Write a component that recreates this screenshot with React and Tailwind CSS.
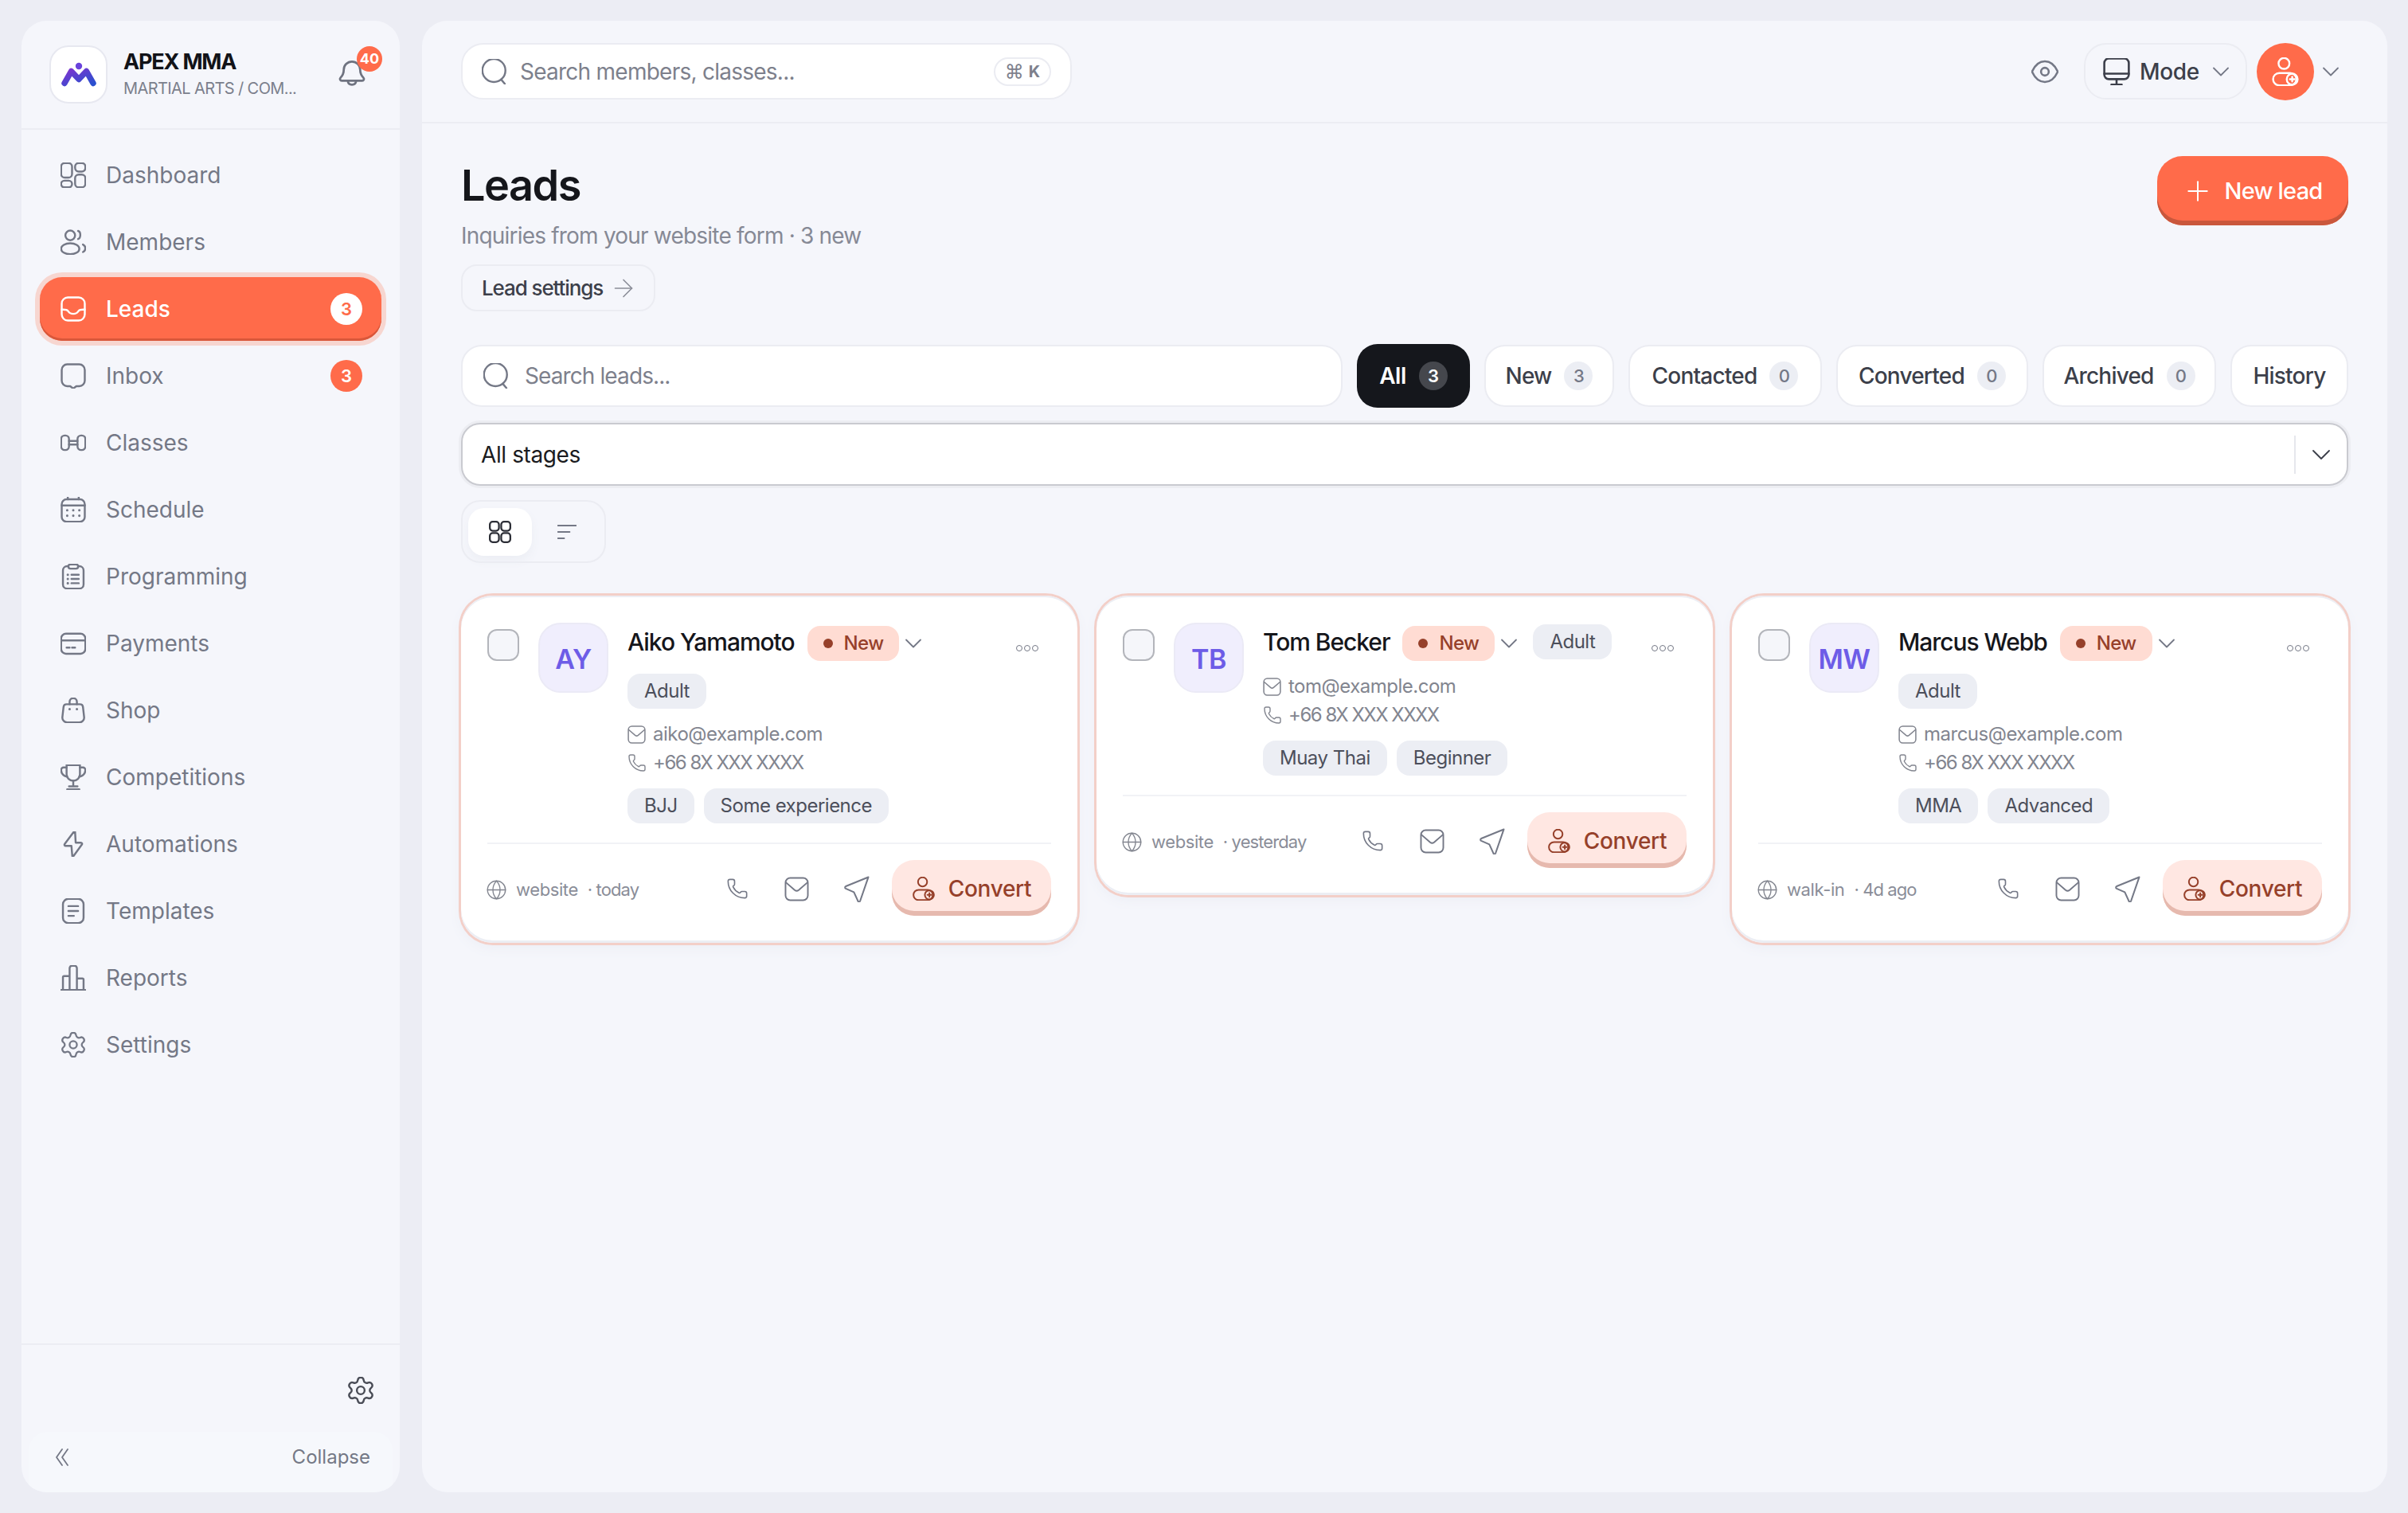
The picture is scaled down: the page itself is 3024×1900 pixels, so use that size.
import { ArrowRight, ChevronDown, Globe, Phone, Plus, Settings } from "lucide-react";

function Icon({ className, children, strokeWidth = 1.6 }) {
  return (
    <svg viewBox="1.5 1.5 21 21" fill="none" stroke="currentColor" strokeWidth={strokeWidth} strokeLinecap="round" strokeLinejoin="round" className={className}>
      {children}
    </svg>
  );
}

const DashboardIcon = (p) => (
  <Icon {...p}>
    <rect x="2" y="2" width="9" height="12" rx="3" />
    <rect x="13.500" y="2" width="8.500" height="7" rx="3" />
    <rect x="2" y="16.500" width="9" height="5.500" rx="2.700" />
    <rect x="13.500" y="11.500" width="8.500" height="10.500" rx="3" />
  </Icon>
);
const MembersIcon = (p) => (
  <Icon {...p}>
    <circle cx="9.500" cy="6.500" r="4" />
    <path d="M16 2.800c2.400.6 2.400 6 0 6.700" />
    <ellipse cx="9.500" cy="17.500" rx="7.500" ry="4.500" />
    <path d="M20 14c2.600 1.200 2.600 5 0 6.200" />
  </Icon>
);
const TrayIcon = (p) => (
  <Icon {...p}>
    <rect x="2.500" y="2.500" width="19" height="19" rx="5" />
    <path d="M2.500 12.500c3 0 4.200-.2 5.200 1.200s1.500 2.300 4.300 2.300 3.300-.9 4.300-2.300 2.200-1.200 5.200-1.200" />
  </Icon>
);
const ChatIcon = (p) => (
  <Icon {...p}>
    <path d="M7 2.500h10a4.500 4.500 0 0 1 4.500 4.500v9a4.500 4.500 0 0 1-4.500 4.500h-2.500L12 22.500l-2.500-2H7A4.500 4.500 0 0 1 2.500 16V7A4.500 4.500 0 0 1 7 2.500z" />
  </Icon>
);
const DumbbellIcon = (p) => (
  <Icon {...p}>
    <rect x="2" y="6" width="6.500" height="12" rx="3" />
    <rect x="15.500" y="6" width="6.500" height="12" rx="3" />
    <path d="M8.500 10.500h7M8.500 13.500h7" />
  </Icon>
);
const CalendarIcon = (p) => (
  <Icon {...p}>
    <rect x="2.500" y="3.500" width="19" height="18.500" rx="4" />
    <path d="M2.500 8.500h19M7.500 1.800v1.700M16.500 1.800v1.700" />
    <path d="M7 12.500h.01M12 12.500h.01M17 12.500h.01M7 17h.01M12 17h.01M17 17h.01" strokeWidth="2" />
  </Icon>
);
const ClipboardIcon = (p) => (
  <Icon {...p}>
    <rect x="3.500" y="3.500" width="17" height="18.500" rx="3.500" />
    <rect x="8" y="2" width="8" height="3.500" rx="1.700" fill="#f5f6fb" />
    <path d="M10.500 10.500h6M10.500 14h6M10.500 17.500h6" />
    <path d="M7.500 10.500h.01M7.500 14h.01M7.500 17.500h.01" strokeWidth="2" />
  </Icon>
);
const CardIcon = (p) => (
  <Icon {...p}>
    <rect x="2" y="4" width="20" height="16.500" rx="4" />
    <path d="M2 9.500h20M6.500 15.500h2.500M11 15.500h2.500" />
  </Icon>
);
const BagIcon = (p) => (
  <Icon {...p}>
    <path d="M6.500 7h11a2.500 2.500 0 0 1 2.500 2.200l1 8.800a4 4 0 0 1-4 4H7a4 4 0 0 1-4-4l1-8.800A2.500 2.500 0 0 1 6.500 7z" />
    <path d="M9 7V5a3 3 0 0 1 6 0v2" />
    <path d="M9 11h.01M15 11h.01" strokeWidth="2" />
  </Icon>
);
const TrophyIcon = (p) => (
  <Icon {...p}>
    <path d="M6.500 2h11v7.500a5.500 5.500 0 0 1-11 0z" />
    <path d="M6.500 4H4a2 2 0 0 0-2 2.200C2.200 9 4 11 7 11.500M17.500 4H20a2 2 0 0 1 2 2.200C21.800 9 20 11 17 11.500" />
    <path d="M12 15v4.500M8.500 19.500h7M7 22h10" />
  </Icon>
);
const ZapIcon = (p) => (
  <Icon {...p}>
    <path d="M12.500 1.800 5 11.800c-.6.800-.2 1.700.8 1.700h4.700l.7 8.300c.1.500.6.600.9.200l6.900-9.500c.6-.8.200-1.700-.8-1.700h-4.200L13.500 2c0-.5-.6-.6-1-.2z" />
  </Icon>
);
const TemplateIcon = (p) => (
  <Icon {...p}>
    <rect x="3.500" y="2" width="17" height="20" rx="4.500" />
    <path d="M8 8h8M8 12h8M8 16h4.500" />
  </Icon>
);
const BarsIcon = (p) => (
  <Icon {...p}>
    <path d="M2 22h20M3.500 22V11.500a1 1 0 0 1 1-1H9M9 22V4a2 2 0 0 1 2-2h2a2 2 0 0 1 2 2v18M15 12.500h4.500a1 1 0 0 1 1 1V22" />
  </Icon>
);
const GearIcon = ({ className }) => <Settings viewBox="1.500 1.500 21 21" className={className} strokeWidth={1.5} />;
const BellIcon = (p) => (
  <Icon {...p}>
    <path d="M6 10a6 6 0 0 1 12 0c0 3 1 4.500 2.500 6 .6.600.2 2-1 2h-15c-1.200 0-1.600-1.400-1-2C5 14.500 6 13 6 10z" />
    <path d="M9 18c0 2 1.300 3 3 3s3-1 3-3" />
  </Icon>
);
const SearchIcon = (p) => (
  <Icon {...p}>
    <circle cx="11.500" cy="11" r="9.500" />
    <path d="M17.500 18.500l3 3.500" />
  </Icon>
);
const EyeIcon = (p) => (
  <Icon {...p}>
    <path d="M2 12c2.500-5.500 6-8 10-8s7.500 2.500 10 8c-2.500 5.500-6 8-10 8s-7.500-2.500-10-8z" />
    <circle cx="12" cy="12" r="3" />
  </Icon>
);
const MonitorIcon = (p) => (
  <Icon {...p}>
    <rect x="2.500" y="1.800" width="19" height="16" rx="3.500" />
    <path d="M2.500 13.500h19M12 18v4M8 22h8" />
  </Icon>
);
const PersonAddIcon = (p) => (
  <Icon {...p}>
    <circle cx="11" cy="6" r="4" />
    <rect x="3" y="13" width="17" height="9" rx="4.500" />
    <circle cx="17" cy="17.500" r="4" />
    <path d="M17 15.800v3.400M15.300 17.500h3.400" />
  </Icon>
);
const MailIcon = (p) => (
  <Icon {...p}>
    <rect x="2.500" y="2.500" width="19" height="19" rx="4" />
    <path d="M3 6.500l7.300 6.300c1 .8 2.400.8 3.400 0L21 6.500" />
  </Icon>
);
const SendIcon = (p) => (
  <Icon {...p}>
    <path d="M21.500 2.500 3.500 9.800c-.8.300-.8 1.400 0 1.800l6.500 2.900 3.200 7c.4.800 1.500.700 1.800-.100z" />
  </Icon>
);
const GridIcon = (p) => (
  <Icon {...p}>
    <rect x="3" y="3" width="8" height="8" rx="2.500" />
    <rect x="13" y="3" width="8" height="8" rx="2.500" />
    <rect x="3" y="13" width="8" height="8" rx="2.500" />
    <rect x="13" y="13" width="8" height="8" rx="2.500" />
  </Icon>
);
const SortIcon = (p) => (
  <Icon {...p}>
    <path d="M2 5h20M2 12h13M2 19h7" />
  </Icon>
);

function Logo() {
  return (
    <svg viewBox="0 0 44 31" className="h-[31px] w-[44px]">
      <defs>
        <linearGradient id="logoGrad" x1="0" y1="0" x2="1" y2="1">
          <stop offset="0" stopColor="#7a35cf" />
          <stop offset="1" stopColor="#2a50cf" />
        </linearGradient>
      </defs>
      <path d="M4 26.500 12.500 11.500 22 21.500 31.500 11.500 40 26.500" fill="none" stroke="url(#logoGrad)" strokeWidth="7.500" strokeLinecap="round" strokeLinejoin="round" />
      <circle cx="22" cy="5" r="4.200" fill="#6a43dc" />
    </svg>
  );
}

const navItems = [
  { label: "Dashboard", icon: DashboardIcon },
  { label: "Members", icon: MembersIcon },
  { label: "Leads", icon: TrayIcon, active: true, badge: "3" },
  { label: "Inbox", icon: ChatIcon, badge: "3" },
  { label: "Classes", icon: DumbbellIcon },
  { label: "Schedule", icon: CalendarIcon },
  { label: "Programming", icon: ClipboardIcon },
  { label: "Payments", icon: CardIcon },
  { label: "Shop", icon: BagIcon },
  { label: "Competitions", icon: TrophyIcon },
  { label: "Automations", icon: ZapIcon },
  { label: "Templates", icon: TemplateIcon },
  { label: "Reports", icon: BarsIcon },
  { label: "Settings", icon: GearIcon },
];

const tabs = [
  { label: "All", count: "3", active: true, width: "w-[142px]" },
  { label: "New", count: "3", width: "w-[163px]" },
  { label: "Contacted", count: "0", width: "w-[243px]" },
  { label: "Converted", count: "0", width: "w-[241px]" },
  { label: "Archived", count: "0", width: "w-[218px]" },
  { label: "History", width: "w-[148px]" },
];

const leads = [
  { initials: "AY", name: "Aiko Yamamoto", email: "aiko@example.com", tags: ["BJJ", "Some experience"], source: "website", when: "today" },
  { initials: "TB", name: "Tom Becker", email: "tom@example.com", tags: ["Muay Thai", "Beginner"], source: "website", when: "yesterday" },
  { initials: "MW", name: "Marcus Webb", email: "marcus@example.com", tags: ["MMA", "Advanced"], source: "walk-in", when: "4d ago" },
];

function Sidebar() {
  return (
    <aside className="flex w-[475px] shrink-0 flex-col overflow-hidden rounded-[32px] bg-[#f5f6fb]">
      <div className="flex h-[137px] shrink-0 items-center border-b-2 border-[#ecedf3] pl-[35px] pr-[42px]">
        <div className="flex h-[73px] w-[73px] shrink-0 items-center justify-center rounded-[24px] border-2 border-[#e7e8f0] bg-white">
          <Logo />
        </div>
        <div className="ml-[20px] min-w-0 flex-1 -translate-y-[1px]">
          <p className="text-[27px] leading-[32px] font-bold tracking-[-1.2px] text-[#121318]">APEX MMA</p>
          <p className="mt-[4px] text-[20px] leading-[26px] tracking-[-0.6px] text-[#7b7f8c]">MARTIAL ARTS / COM...</p>
        </div>
        <div className="relative -mt-[6px] h-[36px] w-[36px] shrink-0 text-[#6f7380]">
          <BellIcon className="h-[36px] w-[36px]" />
          <span className="absolute left-[24px] top-[-15px] flex h-[32px] w-[32px] items-center justify-center rounded-full bg-[#ff6b4a] text-[18px] font-bold text-white">40</span>
        </div>
      </div>

      <nav className="flex flex-1 flex-col gap-[4px] px-[23px] pt-[17px]">
        {navItems.map((item) => {
          const ItemIcon = item.icon;
          return (
            <div
              key={item.label}
              className={
                item.active
                  ? "flex h-[80px] items-center rounded-[28px] bg-[#ff6b4a] pl-[26px] pr-[24px] text-white shadow-[0_0_0_6px_#f7d6d0,inset_0_-3px_0_#d9573a]"
                  : "flex h-[80px] items-center pl-[26px] pr-[24px] text-[#747886]"
              }
            >
              <ItemIcon className="h-[32px] w-[32px] shrink-0" />
              <span className={item.active ? "ml-[25px] flex-1 text-[28px] font-medium" : "ml-[25px] flex-1 text-[28px]"}>{item.label}</span>
              {item.badge ? (
                <span className={item.active ? "flex h-[40px] w-[40px] items-center justify-center rounded-full bg-white text-[22px] font-semibold text-[#ff6b4a]" : "flex h-[40px] w-[40px] items-center justify-center rounded-full bg-[#ff6b4a] text-[22px] font-semibold text-white"}>
                  {item.badge}
                </span>
              ) : null}
            </div>
          );
        })}
      </nav>

      <div className="shrink-0 border-t-2 border-[#ecedf3]">
        <div className="flex justify-end pr-[32px] pt-[40px] pb-[35px] text-[#4a4d57]">
          <GearIcon className="h-[34px] w-[34px]" />
        </div>
        <div className="mx-[9px] flex h-[76px] items-center justify-between rounded-t-[24px] bg-[#f6f8fc] pb-[12px] pl-[34px] pr-[28px] text-[#747886]">
          <svg viewBox="0 0 16 22" fill="none" stroke="currentColor" strokeWidth="1.800" strokeLinecap="round" strokeLinejoin="round" className="h-[22px] w-[16px]">
            <path d="M8 1 1 11l7 10M15 1 8 11l7 10" />
          </svg>
          <span className="text-[24px]">Collapse</span>
        </div>
      </div>
    </aside>
  );
}

function Topbar() {
  return (
    <header className="flex h-[129px] shrink-0 items-center justify-between border-b-2 border-[#ecedf3] pl-[49px] pr-[53px]">
      <div className="flex h-[71px] w-[767px] items-center rounded-[28px] border-2 border-[#ebecf2] bg-white pl-[24px] pr-[24px]">
        <SearchIcon className="h-[32px] w-[32px] text-[#747886]" />
        <span className="ml-[16px] flex-1 text-[28px] tracking-[-0.75px] text-[#7d808c]">Search members, classes...</span>
        <span className="flex h-[36px] w-[72px] items-center justify-center gap-[6px] rounded-full border-2 border-[#ebecf2] text-[#7d808c]">
          <span className="text-[24px]">⌘</span>
          <span className="text-[20px] font-bold">K</span>
        </span>
      </div>
      <div className="flex items-center">
        <EyeIcon className="h-[34px] w-[34px] text-[#747886]" />
        <div className="ml-[32px] flex h-[71px] w-[205px] items-center rounded-[28px] border-2 border-[#ebecf2] pl-[22px] text-[#3c3f4a]">
          <MonitorIcon className="h-[34px] w-[34px]" />
          <span className="ml-[12px] text-[28px] font-medium tracking-[-0.3px]">Mode</span>
          <ChevronDown className="ml-[9px] h-[36px] w-[36px] text-[#747886]" strokeWidth={1.2} />
        </div>
        <div className="ml-[12px] flex h-[72px] w-[72px] items-center justify-center rounded-full bg-[#ff6b4a] text-white">
          <PersonAddIcon className="h-[36px] w-[36px]" strokeWidth={1.4} />
        </div>
        <ChevronDown className="ml-[3px] h-[36px] w-[36px] text-[#747886]" strokeWidth={1.2} />
      </div>
    </header>
  );
}

function Tag({ children }) {
  return <span className="flex h-[44px] items-center rounded-[16px] bg-[#eceef4] px-[21px] text-[24px] tracking-[-0.5px] text-[#4c4f5b]">{children}</span>;
}

function LeadCard({ lead }) {
  return (
    <div className="rounded-[40px] bg-white px-[33px] pt-[34px] pb-[34px] shadow-[0_0_0_3px_#f3cfc8,inset_0_2px_0_#eceef4,inset_0_-3px_0_#eceef4,0_6px_16px_#eceef5]">
      <div className="flex items-start">
        <div className="mt-[8px] h-[40px] w-[40px] shrink-0 rounded-[12px] border-2 border-[#b3b5bb] bg-[#f5f6fa]" />
        <div className="ml-[24px] flex h-[88px] w-[88px] shrink-0 items-center justify-center rounded-[28px] border-2 border-[#ebeaf6] bg-[#f0eefd] pt-[2px] text-[34px] font-semibold tracking-[-0.5px] text-[#6d5ce7]">
          {lead.initials}
        </div>
        <div className="ml-[24px] min-w-0 flex-1 pt-[2px]">
          <div className="flex flex-wrap items-start gap-x-[16px] gap-y-[16px]">
            <span className="flex h-[44px] items-center text-[30px] font-medium tracking-[-1.05px] text-[#15161b]">{lead.name}</span>
            <div className="mt-[2px] -mr-[4px] flex items-center">
              <span className="flex h-[44px] items-center gap-[14px] rounded-[16px] bg-[#ffdcd3] pl-[20px] pr-[20px] text-[24px] font-medium tracking-[-0.6px] text-[#96402a]">
                <span className="h-[12px] w-[12px] rounded-full bg-[#96402a]" />
                New
              </span>
              <ChevronDown className="h-[36px] w-[36px] text-[#747886]" strokeWidth={1.2} />
            </div>
            <Tag>Adult</Tag>
          </div>
          <div className="mt-[14px] flex h-[36px] items-center gap-[9px] text-[24px] tracking-[-0.5px] text-[#82858f]">
            <MailIcon className="h-[23px] w-[23px] shrink-0" strokeWidth={1.4} />
            {lead.email}
          </div>
          <div className="flex h-[36px] items-center gap-[8px] text-[24px] tracking-[-1.5px] text-[#82858f]">
            <Phone className="h-[24px] w-[24px] shrink-0" strokeWidth={1.4} />
            +66 8X XXX XXXX
          </div>
          <div className="mt-[14px] flex gap-[12px]">
            {lead.tags.map((tag) => (
              <Tag key={tag}>{tag}</Tag>
            ))}
          </div>
        </div>
        <div className="mt-[28px] flex w-[76px] shrink-0 justify-start gap-[2px] pl-[32px]">
          <span className="h-[8px] w-[8px] rounded-full border-[1.5px] border-[#747886]" />
          <span className="h-[8px] w-[8px] rounded-full border-[1.5px] border-[#747886]" />
          <span className="h-[8px] w-[8px] rounded-full border-[1.5px] border-[#747886]" />
        </div>
      </div>

      <div className="mt-[24px] border-t-2 border-[#f1f2f6] pt-[20px]">
        <div className="flex items-center">
          <Globe className="-ml-[2px] mt-[4px] h-[27px] w-[27px] shrink-0 text-[#82858f]" strokeWidth={1.2} />
          <span className="ml-[11px] mt-[4px] text-[22px] tracking-[-0.4px] text-[#8a8d98]">{lead.source}</span>
          <span className="ml-[12px] mt-[4px] flex-1 text-[22px] tracking-[-0.9px] text-[#8a8d98]">· {lead.when}</span>
          <div className="mt-[2px] flex items-center text-[#747886]">
            <span className="flex w-[75px] justify-center">
              <Phone className="h-[28px] w-[28px]" strokeWidth={1.4} />
            </span>
            <span className="flex w-[75px] justify-center">
              <MailIcon className="h-[31px] w-[31px]" strokeWidth={1.3} />
            </span>
            <span className="flex w-[75px] justify-center">
              <SendIcon className="h-[33px] w-[33px]" strokeWidth={1.3} />
            </span>
          </div>
          <div className="ml-[7px] flex h-[70px] w-[200px] shrink-0 items-center justify-center gap-[16px] rounded-[28px] bg-[#ffe7e2] pt-[2px] text-[28px] font-medium tracking-[-0.3px] text-[#96402a] shadow-[inset_0_-6px_0_#e6b9ae]">
            <PersonAddIcon className="h-[30px] w-[30px]" strokeWidth={1.4} />
            Convert
          </div>
        </div>
      </div>
    </div>
  );
}

export default function App() {
  return (
    <div className="flex h-[1900px] gap-[28px] bg-[#ecedf4] pt-[26px] pr-[26px] pb-[26px] pl-[27px] [font-family:Inter,sans-serif]">
      <Sidebar />
      <main className="flex min-w-0 flex-1 flex-col overflow-hidden rounded-[32px] bg-[#f5f6fb]">
        <Topbar />
        <div className="pl-[49px] pr-[49px] pt-[41px]">
          <div className="flex items-start justify-between">
            <div>
              <h1 className="mt-[1px] text-[54px] leading-[72px] font-semibold tracking-[-1.5px] text-[#15161b]">Leads</h1>
              <p className="mt-[5px] text-[28px] leading-[44px] tracking-[-0.8px] text-[#868995]">Inquiries from your website form · 3 new</p>
              <div className="mt-[14px] flex h-[59px] w-[244px] items-center rounded-[20px] border-2 border-[#ebecf2] pl-[24px] text-[#3c3f4a]">
                <span className="text-[26px] font-medium tracking-[-1.1px]">Lead settings</span>
                <ArrowRight className="ml-[8px] h-[36px] w-[36px] text-[#8a8d98]" strokeWidth={1.1} />
              </div>
            </div>
            <div className="flex h-[87px] w-[240px] items-center justify-center gap-[14px] rounded-[32px] bg-[#ff6b4a] pl-[6px] text-white shadow-[inset_0_-6px_0_#c9573c]">
              <Plus className="-mx-[8px] h-[40px] w-[40px]" strokeWidth={1.2} />
              <span className="ml-[8px] text-[29px] font-medium tracking-[-0.8px]">New lead</span>
            </div>
          </div>

          <div className="mt-[41px] flex items-center gap-[18px]">
            <div className="flex h-[78px] min-w-0 flex-1 items-center rounded-[26px] border-2 border-[#ebecf2] bg-white pl-[26px]">
              <SearchIcon className="h-[32px] w-[32px] text-[#747886]" />
              <span className="ml-[20px] text-[28px] tracking-[-0.9px] text-[#7d808c]">Search leads...</span>
            </div>
            {tabs.map((tab) => (
              <div
                key={tab.label}
                className={
                  tab.active
                    ? `flex h-[80px] ${tab.width} items-center justify-center gap-[16px] rounded-[26px] bg-[#15171c] text-[28px] font-semibold tracking-[-0.5px] text-white`
                    : `flex h-[78px] ${tab.width} items-center justify-center gap-[16px] rounded-[26px] border-2 border-[#ebecf2] bg-white text-[28px] font-medium tracking-[-0.8px] text-[#3c3f4a]`
                }
              >
                {tab.label}
                {tab.count ? (
                  <span className={tab.active ? "flex h-[36px] w-[36px] items-center justify-center rounded-full bg-[#45474d] text-[22px] text-white" : "flex h-[36px] w-[36px] items-center justify-center rounded-full bg-[#eceef4] text-[22px] text-[#747886]"}>
                    {tab.count}
                  </span>
                ) : null}
              </div>
            ))}
          </div>

          <div className="mt-[19px] flex h-[79px] items-center rounded-[24px] border-2 border-[#c9cad0] bg-white pl-[23px] shadow-[0_0_0_3px_#ecedf2]">
            <span className="flex-1 text-[28px] tracking-[-0.4px] text-[#1a1b20]">All stages</span>
            <div className="flex h-[48px] w-[66px] items-center justify-center border-l-2 border-[#e6e7ec] text-[#3c3f4a]">
              <ChevronDown className="h-[40px] w-[40px] shrink-0" strokeWidth={1.1} />
            </div>
          </div>

          <div className="mt-[18px] flex h-[79px] w-[182px] items-center rounded-[24px] border-2 border-[#ebecf2] pl-[7px]">
            <div className="flex h-[60px] w-[80px] items-center justify-center rounded-[20px] bg-white text-[#2c2e36] shadow-[0_6px_12px_#eceef4]">
              <GridIcon className="h-[30px] w-[30px]" />
            </div>
            <div className="ml-[32px] text-[#747886]">
              <SortIcon className="h-[24px] w-[24px]" />
            </div>
          </div>

          <div className="mt-[41px] grid grid-cols-3 items-start gap-[24px]">
            {leads.map((lead) => (
              <LeadCard key={lead.initials} lead={lead} />
            ))}
          </div>
        </div>
      </main>
    </div>
  );
}
